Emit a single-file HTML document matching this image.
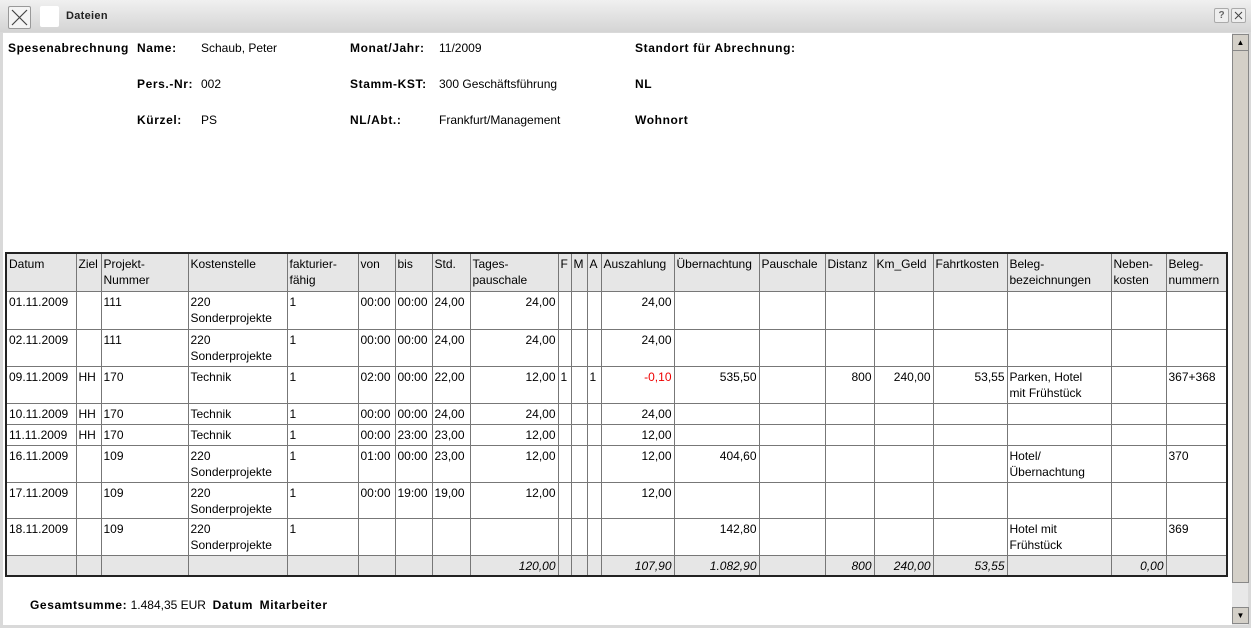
<html><head><style>
body{margin:0;width:1251px;height:628px;background:#d9d9d9;font-family:"Liberation Sans",Arial,sans-serif;font-size:12px;position:relative;overflow:hidden}
.a{position:absolute}
.tb{left:0;top:0;width:1251px;height:32px;background:linear-gradient(#f0f0f0,#d4d4d4)}
.content{left:3px;top:33px;width:1229px;height:592px;background:#fff}
.b{font-weight:bold;letter-spacing:0.6px}
b{letter-spacing:0.6px}
table{position:absolute;left:5px;top:252px;border-collapse:collapse;table-layout:fixed;border:2px solid #222;font-size:12px}
td{border:1px solid #777;padding:2px 2px 0 2px;vertical-align:top;line-height:16px;white-space:nowrap;overflow:hidden}
tr.h td{background:#e6e6e6}
tr.f td{background:#e6e6e6;font-style:italic;text-align:right}
.r{text-align:right}
</style></head><body>
<div class="a tb"></div>
<div class="a" style="left:8px;top:6px;width:21px;height:21px;border:1px solid #999;background:#f4f4f4;border-radius:2px"><svg width="21" height="21"><path d="M3 3L18 18M18 3L3 18" stroke="#444" stroke-width="1.2"/></svg></div>
<div class="a" style="left:40px;top:6px;width:19px;height:21px;background:#fff;border-radius:2px"></div>
<div class="a b" style="left:66px;top:10px;font-size:11px;color:#222;letter-spacing:0.3px">Dateien</div>
<div class="a" style="left:1214px;top:8px;width:13px;height:13px;border:1px solid #aaa;background:#eee;border-radius:2px;font-size:10px;font-weight:bold;text-align:center;line-height:13px;color:#666">?</div>
<div class="a" style="left:1231px;top:8px;width:13px;height:13px;border:1px solid #aaa;background:#eee;border-radius:2px"><svg width="13" height="13"><path d="M3 3L10 10M10 3L3 10" stroke="#444"/></svg></div>
<div class="a content"></div>
<div class="a" style="left:1232px;top:33px;width:16px;height:592px;background:#e8e8e8"></div>
<div class="a" style="left:1232px;top:34px;width:15px;height:15px;background:#d4d0c8;border:1px solid #888;font-size:8px;text-align:center;line-height:15px">▲</div>
<div class="a" style="left:1232px;top:50px;width:15px;height:531px;background:#d4d0c8;border:1px solid #888"></div>
<div class="a" style="left:1232px;top:607px;width:15px;height:15px;background:#d4d0c8;border:1px solid #888;font-size:8px;text-align:center;line-height:15px">▼</div>

<div class="a b" style="left:8px;top:41px">Spesenabrechnung</div>
<div class="a b" style="left:137px;top:41px">Name:</div>
<div class="a" style="left:201px;top:41px">Schaub, Peter</div>
<div class="a b" style="left:350px;top:41px">Monat/Jahr:</div>
<div class="a" style="left:439px;top:41px">11/2009</div>
<div class="a b" style="left:635px;top:41px">Standort für Abrechnung:</div>
<div class="a b" style="left:137px;top:77px">Pers.-Nr:</div>
<div class="a" style="left:201px;top:77px">002</div>
<div class="a b" style="left:350px;top:77px">Stamm-KST:</div>
<div class="a" style="left:439px;top:77px">300 Geschäftsführung</div>
<div class="a b" style="left:635px;top:77px">NL</div>
<div class="a b" style="left:137px;top:113px">Kürzel:</div>
<div class="a" style="left:201px;top:113px">PS</div>
<div class="a b" style="left:350px;top:113px">NL/Abt.:</div>
<div class="a" style="left:439px;top:113px">Frankfurt/Management</div>
<div class="a b" style="left:635px;top:113px">Wohnort</div>

<table>
<colgroup><col width="70"><col width="25"><col width="87"><col width="99"><col width="71"><col width="37"><col width="37"><col width="38"><col width="88"><col width="13"><col width="16"><col width="14"><col width="73"><col width="85"><col width="66"><col width="49"><col width="59"><col width="74"><col width="104"><col width="55"><col width="61"></colgroup>
<tr class="h" style="height:38px"><td>Datum</td><td>Ziel</td><td>Projekt-<br>Nummer</td><td>Kostenstelle</td><td>fakturier-<br>fähig</td><td>von</td><td>bis</td><td>Std.</td><td>Tages-<br>pauschale</td><td>F</td><td>M</td><td>A</td><td>Auszahlung</td><td>Übernachtung</td><td>Pauschale</td><td>Distanz</td><td>Km_Geld</td><td>Fahrtkosten</td><td>Beleg-<br>bezeichnungen</td><td>Neben-<br>kosten</td><td>Beleg-<br>nummern</td></tr>
<tr style="height:38px"><td>01.11.2009</td><td></td><td>111</td><td>220<br>Sonderprojekte</td><td>1</td><td>00:00</td><td>00:00</td><td>24,00</td><td class="r">24,00</td><td></td><td></td><td></td><td class="r">24,00</td><td></td><td></td><td></td><td></td><td></td><td></td><td></td><td></td></tr>
<tr style="height:37px"><td>02.11.2009</td><td></td><td>111</td><td>220<br>Sonderprojekte</td><td>1</td><td>00:00</td><td>00:00</td><td>24,00</td><td class="r">24,00</td><td></td><td></td><td></td><td class="r">24,00</td><td></td><td></td><td></td><td></td><td></td><td></td><td></td><td></td></tr>
<tr style="height:37px"><td>09.11.2009</td><td>HH</td><td>170</td><td>Technik</td><td>1</td><td>02:00</td><td>00:00</td><td>22,00</td><td class="r">12,00</td><td>1</td><td></td><td>1</td><td class="r" style="color:#e00">-0,10</td><td class="r">535,50</td><td></td><td class="r">800</td><td class="r">240,00</td><td class="r">53,55</td><td>Parken, Hotel<br>mit Frühstück</td><td></td><td>367+368</td></tr>
<tr style="height:21px"><td>10.11.2009</td><td>HH</td><td>170</td><td>Technik</td><td>1</td><td>00:00</td><td>00:00</td><td>24,00</td><td class="r">24,00</td><td></td><td></td><td></td><td class="r">24,00</td><td></td><td></td><td></td><td></td><td></td><td></td><td></td><td></td></tr>
<tr style="height:21px"><td>11.11.2009</td><td>HH</td><td>170</td><td>Technik</td><td>1</td><td>00:00</td><td>23:00</td><td>23,00</td><td class="r">12,00</td><td></td><td></td><td></td><td class="r">12,00</td><td></td><td></td><td></td><td></td><td></td><td></td><td></td><td></td></tr>
<tr style="height:37px"><td>16.11.2009</td><td></td><td>109</td><td>220<br>Sonderprojekte</td><td>1</td><td>01:00</td><td>00:00</td><td>23,00</td><td class="r">12,00</td><td></td><td></td><td></td><td class="r">12,00</td><td class="r">404,60</td><td></td><td></td><td></td><td></td><td>Hotel/<br>Übernachtung</td><td></td><td>370</td></tr>
<tr style="height:36px"><td>17.11.2009</td><td></td><td>109</td><td>220<br>Sonderprojekte</td><td>1</td><td>00:00</td><td>19:00</td><td>19,00</td><td class="r">12,00</td><td></td><td></td><td></td><td class="r">12,00</td><td></td><td></td><td></td><td></td><td></td><td></td><td></td><td></td></tr>
<tr style="height:37px"><td>18.11.2009</td><td></td><td>109</td><td>220<br>Sonderprojekte</td><td>1</td><td></td><td></td><td></td><td></td><td></td><td></td><td></td><td></td><td class="r">142,80</td><td></td><td></td><td></td><td></td><td>Hotel mit<br>Frühstück</td><td></td><td>369</td></tr>
<tr class="f" style="height:21px"><td></td><td></td><td></td><td></td><td></td><td></td><td></td><td></td><td>120,00</td><td></td><td></td><td></td><td>107,90</td><td>1.082,90</td><td></td><td>800</td><td>240,00</td><td>53,55</td><td></td><td>0,00</td><td></td></tr>
</table>

<div class="a" style="left:30px;top:598px"><b>Gesamtsumme:</b> 1.484,35 EUR &nbsp;<b>Datum</b> &nbsp;<b>Mitarbeiter</b></div>
</body></html>
